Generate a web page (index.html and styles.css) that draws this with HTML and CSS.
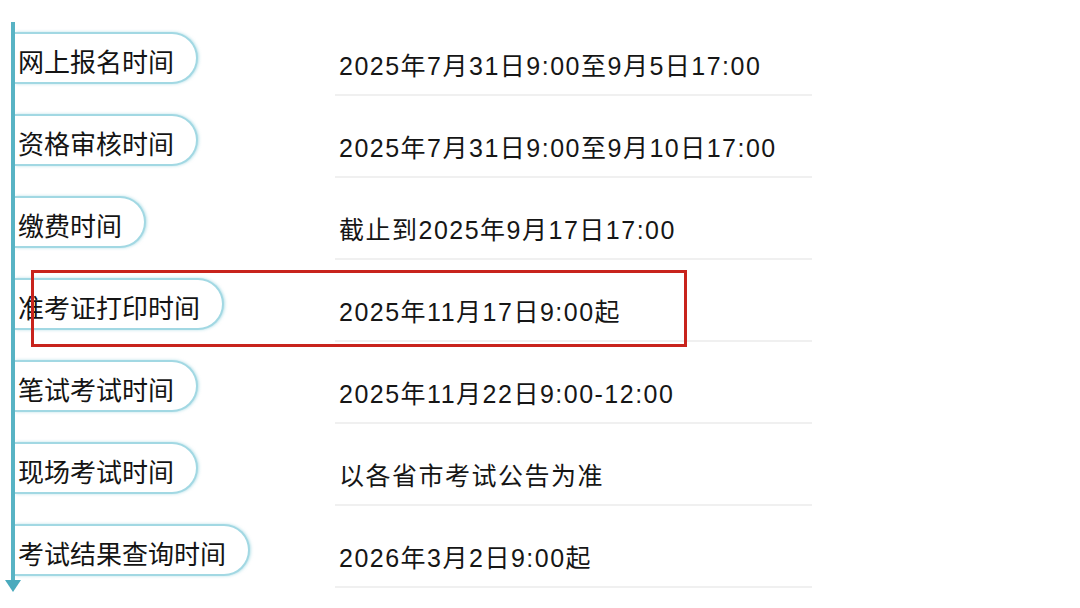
FILE: index.html
```html
<!DOCTYPE html>
<html lang="zh-CN">
<head>
<meta charset="utf-8">
<title>考试时间安排</title>
<link rel="stylesheet" href="styles.css">
</head>
<body>
<div class="page">
  <div class="timeline">
    <div class="row">
      <div class="label-cell"><span class="pill">网上报名时间</span></div>
      <div class="value">2025年7月31日9:00至9月5日17:00</div>
    </div>
    <div class="row">
      <div class="label-cell"><span class="pill">资格审核时间</span></div>
      <div class="value">2025年7月31日9:00至9月10日17:00</div>
    </div>
    <div class="row">
      <div class="label-cell"><span class="pill">缴费时间</span></div>
      <div class="value">截止到2025年9月17日17:00</div>
    </div>
    <div class="row">
      <div class="label-cell"><span class="pill">准考证打印时间</span></div>
      <div class="value">2025年11月17日9:00起</div>
    </div>
    <div class="row">
      <div class="label-cell"><span class="pill">笔试考试时间</span></div>
      <div class="value">2025年11月22日9:00-12:00</div>
    </div>
    <div class="row">
      <div class="label-cell"><span class="pill">现场考试时间</span></div>
      <div class="value">以各省市考试公告为准</div>
    </div>
    <div class="row">
      <div class="label-cell"><span class="pill">考试结果查询时间</span></div>
      <div class="value">2026年3月2日9:00起</div>
    </div>
  </div>
  <div class="highlight"></div>
</div>
</body>
</html>
```

FILE: styles.css
```css
html, body {
  margin: 0;
  padding: 0;
  background: #ffffff;
}

.page {
  position: relative;
  width: 1080px;
  height: 608px;
  overflow: hidden;
  font-family: "Liberation Sans", "Noto Sans CJK SC", sans-serif;
  color: #1c1c1c;
}

.timeline {
  position: relative;
  margin: 0 0 0 11px;
  padding-top: 22px;
  display: flex;
  flex-direction: column;
}

.timeline::before {
  content: "";
  position: absolute;
  left: 0;
  top: 22px;
  width: 4px;
  height: 560px;
  background: #58b3c4;
}

.timeline::after {
  content: "";
  position: absolute;
  left: -6px;
  top: 580px;
  width: 0;
  height: 0;
  border-left: 8px solid transparent;
  border-right: 8px solid transparent;
  border-top: 12px solid #4aaabd;
}

.row {
  display: flex;
  height: 82px;
}

.label-cell {
  width: 324px;
  padding-top: 10px;
  padding-left: 4px;
  box-sizing: border-box;
}

.pill {
  display: inline-flex;
  align-items: center;
  box-sizing: border-box;
  height: 52px;
  padding: 6px 22px 0 3px;
  border: 2px solid #a2d8e3;
  border-left: none;
  border-radius: 0 26px 26px 0;
  box-shadow: 1px 0 3px rgba(110, 195, 212, 0.5);
  background: #ffffff;
  font-family: "Noto Sans CJK SC", sans-serif;
  font-size: 26px;
  line-height: 30px;
  color: #141414;
  white-space: nowrap;
}

.value {
  width: 477px;
  height: 74px;
  box-sizing: border-box;
  padding: 30px 0 0 4px;
  border-bottom: 2px solid #f0f0f0;
  font-size: 25px;
  line-height: 28px;
  letter-spacing: 1.5px;
  white-space: nowrap;
  color: #161616;
}

.highlight {
  position: absolute;
  left: 31px;
  top: 270px;
  width: 656px;
  height: 77px;
  box-sizing: border-box;
  border: 3px solid #c8231c;
}
```
